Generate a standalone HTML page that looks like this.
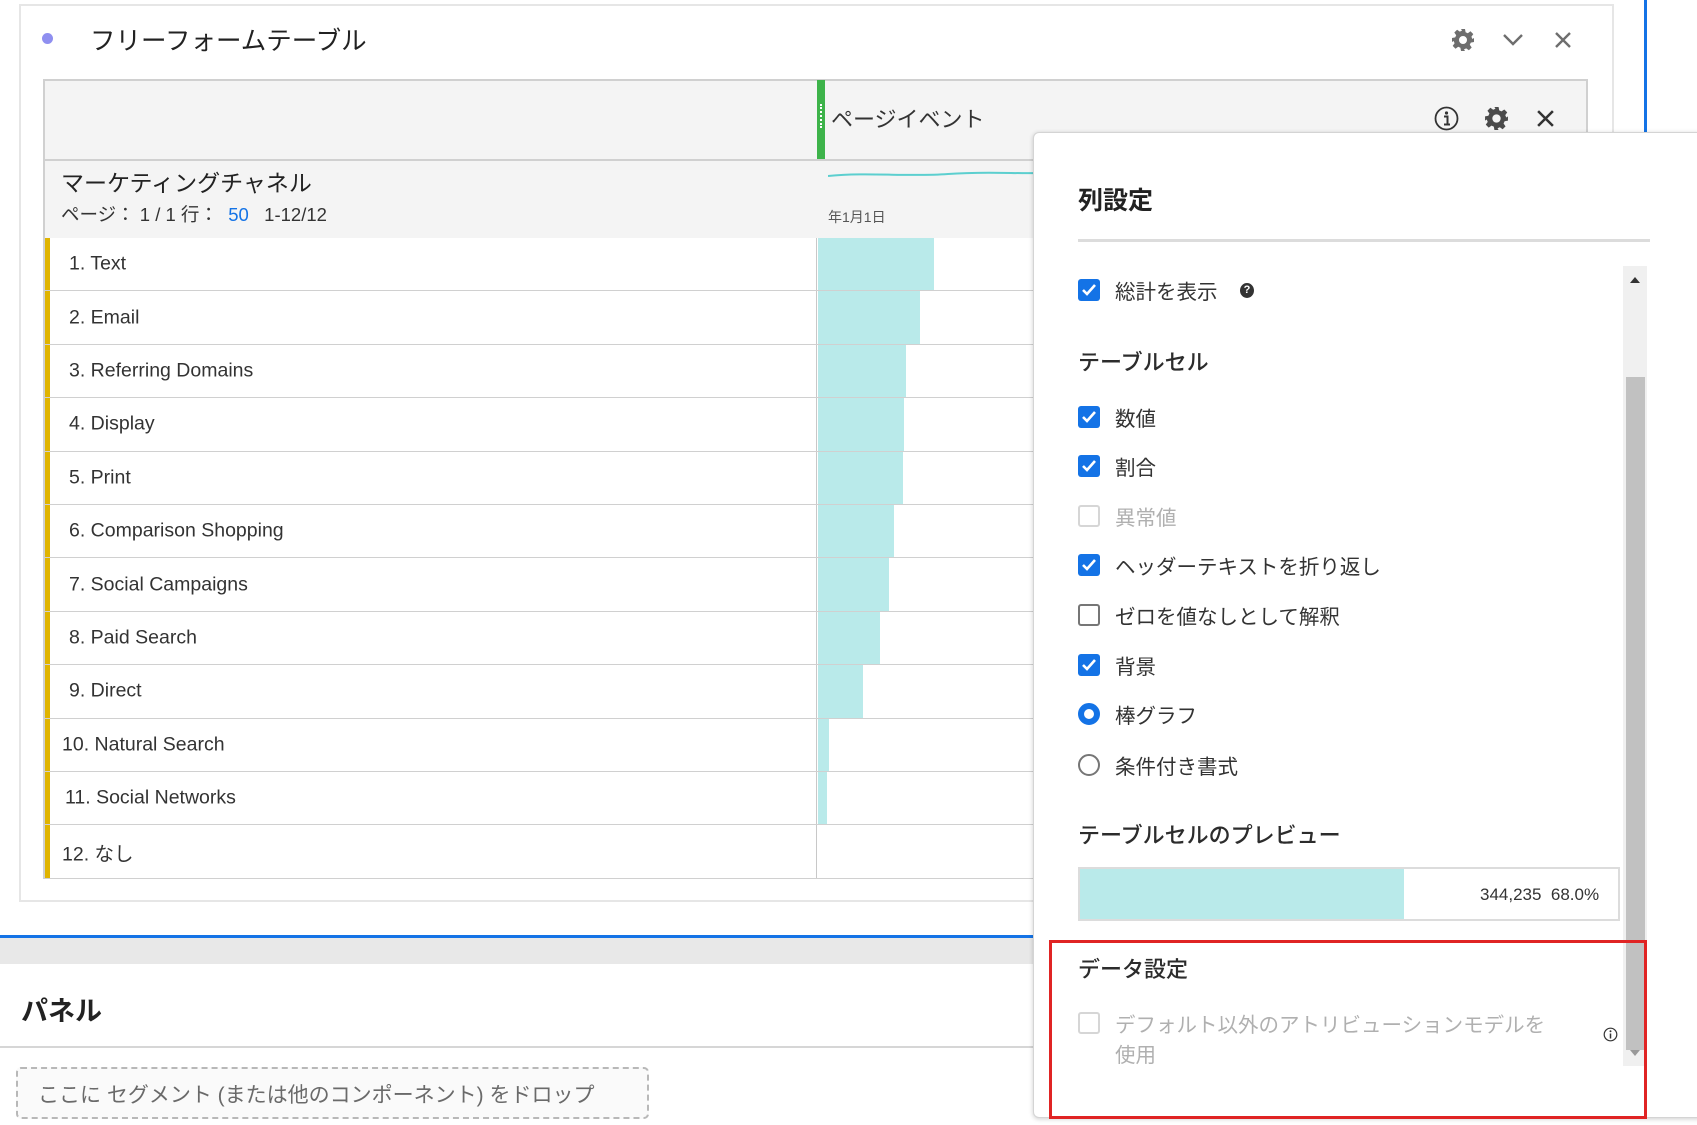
<!DOCTYPE html>
<html><head><meta charset="utf-8"><style>
*{margin:0;padding:0;box-sizing:border-box}
body{width:1697px;height:1125px;position:relative;overflow:hidden;background:#fff;font-family:"Liberation Sans","Noto Sans CJK JP",sans-serif;color:#2c2c2c}
.a{position:absolute;white-space:nowrap}
.c{transform:translateY(-50%)}
.row{position:absolute;left:43px;width:1000px;height:53.4px;border-bottom:1px solid #d0d0d0}
.row .y{position:absolute;left:2px;top:0;bottom:0;width:5px;background:#e0b400}
.row .t{position:absolute;top:50%;transform:translateY(-50%);font-size:19.5px;color:#333}
.row .b{position:absolute;left:775px;top:0;bottom:0;background:#b9eaea}
.row .d{position:absolute;left:773px;top:0;bottom:0;width:1px;background:#c8c8c8}
.cb{position:absolute;left:1078px;width:22px;height:22px;border-radius:3px;background:#1473e6}
.cb svg{position:absolute;left:3px;top:4px}
.cbo{position:absolute;left:1078px;width:22px;height:22px;border-radius:3px;border:2px solid #767676;background:#fff}
.lbl{position:absolute;left:1115px;font-size:20.5px;color:#333;transform:translateY(-50%);white-space:nowrap}
.h{position:absolute;left:1078px;font-size:22px;color:#2c2c2c;transform:translateY(-50%);white-space:nowrap;font-weight:500}
</style></head><body>
<div class="a" style="left:19px;top:4px;width:1595px;height:898px;border:2px solid #e6e6e6"></div>
<div class="a" style="left:1644px;top:0;width:3px;height:140px;background:#1473e6"></div>
<div class="a" style="left:42px;top:33px;width:11px;height:11px;border-radius:50%;background:#8f8ff0"></div>
<div class="a c" style="left:90px;top:39px;font-size:25.5px;color:#222">フリーフォームテーブル</div>
<svg class="a" style="left:1451px;top:28px" width="24" height="24" viewBox="0 0 24 24"><path fill="#6e6e6e" d="M10 1h4l.6 3.2 2.2 1 2.7-1.9 2.8 2.8-1.9 2.7 1 2.2L23 10v4l-3.2.6-1 2.2 1.9 2.7-2.8 2.8-2.7-1.9-2.2 1L14 23h-4l-.6-3.2-2.2-1-2.7 1.9-2.8-2.8 1.9-2.7-1-2.2L1 14v-4l3.2-.6 1-2.2-1.9-2.7 2.8-2.8 2.7 1.9 2.2-1zM12 8a4 4 0 100 8 4 4 0 000-8z"/></svg>
<svg class="a" style="left:1502px;top:32px" width="22" height="16" viewBox="0 0 22 16"><path d="M2 3l9 9 9-9" stroke="#6e6e6e" stroke-width="2.4" fill="none"/></svg>
<svg class="a" style="left:1554px;top:31px" width="18" height="18" viewBox="0 0 18 18"><path d="M2 2l14 14M16 2L2 16" stroke="#6e6e6e" stroke-width="2.4"/></svg>
<div class="a" style="left:43px;top:79px;width:1545px;height:159px;background:#f4f4f4;border:2px solid #d0d0d0;border-bottom:none"></div>
<div class="a" style="left:43px;top:159px;width:1545px;height:2px;background:#d0d0d0"></div>
<div class="a" style="left:817px;top:80px;width:2px;height:79px;background:#c8c8c8"></div>
<div class="a" style="left:817px;top:80px;width:8px;height:79px;background:#3db34a"></div>
<div class="a" style="left:820px;top:104px;width:2px;height:24px;border-left:2px dotted #fff"></div>
<div class="a c" style="left:831px;top:118px;font-size:22px;color:#333">ページイベント</div>
<svg class="a" style="left:1434px;top:106px" width="25" height="25" viewBox="0 0 25 25"><circle cx="12.5" cy="12.5" r="11" stroke="#333" stroke-width="1.8" fill="none"/><circle cx="12.5" cy="7" r="1.6" fill="#333"/><path d="M10 10.5h3.5v8M10 18.5h6" stroke="#333" stroke-width="2" fill="none"/></svg>
<svg class="a" style="left:1484px;top:106px" width="25" height="25" viewBox="0 0 24 24"><path fill="#4b4b4b" d="M10 1h4l.6 3.2 2.2 1 2.7-1.9 2.8 2.8-1.9 2.7 1 2.2L23 10v4l-3.2.6-1 2.2 1.9 2.7-2.8 2.8-2.7-1.9-2.2 1L14 23h-4l-.6-3.2-2.2-1-2.7 1.9-2.8-2.8 1.9-2.7-1-2.2L1 14v-4l3.2-.6 1-2.2-1.9-2.7 2.8-2.8 2.7 1.9 2.2-1zM12 8a4 4 0 100 8 4 4 0 000-8z"/></svg>
<svg class="a" style="left:1536px;top:109px" width="19" height="19" viewBox="0 0 18 18"><path d="M2 2l14 14M16 2L2 16" stroke="#333" stroke-width="2.4"/></svg>
<div class="a c" style="left:61px;top:181px;font-size:23px;color:#222">マーケティングチャネル</div>
<div class="a c" style="left:61px;top:214px;font-size:18.5px;color:#333">ページ： 1 / 1 行： &nbsp;<span style="color:#1473e6">50</span>&nbsp;&nbsp; 1-12/12</div>
<svg class="a" style="left:828px;top:168px" width="210" height="14"><path d="M0 8 C40 4 80 9 120 6 S190 6 210 5" stroke="#5ccfcf" stroke-width="2" fill="none"/></svg>
<div class="a c" style="left:828px;top:217px;font-size:14px;color:#555">年1月1日</div>
<div class="row" style="top:238px"><div class="y"></div><div class="b" style="width:116px"></div><div class="d"></div><div class="t" style="left:26px">1. Text</div></div>
<div class="row" style="top:291.4px"><div class="y"></div><div class="b" style="width:102px"></div><div class="d"></div><div class="t" style="left:26px">2. Email</div></div>
<div class="row" style="top:344.8px"><div class="y"></div><div class="b" style="width:88px"></div><div class="d"></div><div class="t" style="left:26px">3. Referring Domains</div></div>
<div class="row" style="top:398.2px"><div class="y"></div><div class="b" style="width:86px"></div><div class="d"></div><div class="t" style="left:26px">4. Display</div></div>
<div class="row" style="top:451.6px"><div class="y"></div><div class="b" style="width:85px"></div><div class="d"></div><div class="t" style="left:26px">5. Print</div></div>
<div class="row" style="top:505px"><div class="y"></div><div class="b" style="width:76px"></div><div class="d"></div><div class="t" style="left:26px">6. Comparison Shopping</div></div>
<div class="row" style="top:558.4px"><div class="y"></div><div class="b" style="width:71px"></div><div class="d"></div><div class="t" style="left:26px">7. Social Campaigns</div></div>
<div class="row" style="top:611.8px"><div class="y"></div><div class="b" style="width:62px"></div><div class="d"></div><div class="t" style="left:26px">8. Paid Search</div></div>
<div class="row" style="top:665.2px"><div class="y"></div><div class="b" style="width:45px"></div><div class="d"></div><div class="t" style="left:26px">9. Direct</div></div>
<div class="row" style="top:718.6px"><div class="y"></div><div class="b" style="width:11px"></div><div class="d"></div><div class="t" style="left:19px">10. Natural Search</div></div>
<div class="row" style="top:772px"><div class="y"></div><div class="b" style="width:9px"></div><div class="d"></div><div class="t" style="left:22px">11. Social Networks</div></div>
<div class="row" style="top:825.4px"><div class="y"></div><div class="d"></div><div class="t" style="left:19px">12. なし</div></div>
<div class="a" style="left:43px;top:238px;width:2px;height:641px;background:#d0d0d0"></div>
<div class="a" style="left:0;top:935px;width:1040px;height:3px;background:#1473e6"></div>
<div class="a" style="left:0;top:938px;width:1040px;height:26px;background:#e8e8e8"></div>
<div class="a c" style="left:21px;top:1009px;font-size:27px;font-weight:bold;color:#222">パネル</div>
<div class="a" style="left:0;top:1046px;width:1040px;height:2px;background:#d6d6d6"></div>
<div class="a" style="left:16px;top:1067px;width:633px;height:52px;border:2px dashed #b8b8b8;border-radius:5px;background:#fafafa"></div>
<div class="a c" style="left:38px;top:1094px;font-size:21px;color:#6a6a6a">ここに セグメント (または他のコンポーネント) をドロップ</div>
<div class="a" style="left:1033px;top:132px;width:670px;height:986px;background:#fff;border:1px solid #d4d4d4;border-radius:6px;box-shadow:0 1px 5px rgba(0,0,0,.2)"></div>
<div class="a c" style="left:1078px;top:199px;font-size:25px;font-weight:bold;color:#222">列設定</div>
<div class="a" style="left:1078px;top:239px;width:572px;height:3px;background:#dcdcdc"></div>
<div class="a" style="left:1623px;top:266px;width:24px;height:800px;background:#f0f0f0"></div>
<div class="a" style="left:1626px;top:377px;width:19px;height:673px;background:#c1c1c1"></div>
<div class="a" style="left:1630px;top:277px;width:0;height:0;border-left:5px solid transparent;border-right:5px solid transparent;border-bottom:6px solid #333"></div>
<div class="a" style="left:1630px;top:1050px;width:0;height:0;border-left:5px solid transparent;border-right:5px solid transparent;border-top:6px solid #999"></div>
<div class="cb" style="top:279px"><svg width="16" height="14"><path d="M2 7l4 4 8-9" stroke="#fff" stroke-width="2.6" fill="none"/></svg></div>
<div class="lbl" style="top:290px">総計を表示</div>
<div class="a" style="left:1240px;top:283px;width:14px;height:15px;border-radius:50%;background:#333;color:#fff;font-size:11px;font-weight:bold;text-align:center;line-height:15px">?</div>
<div class="h" style="top:361px">テーブルセル</div>
<div class="cb" style="top:406px"><svg width="16" height="14"><path d="M2 7l4 4 8-9" stroke="#fff" stroke-width="2.6" fill="none"/></svg></div>
<div class="lbl" style="top:417px">数値</div>
<div class="cb" style="top:455px"><svg width="16" height="14"><path d="M2 7l4 4 8-9" stroke="#fff" stroke-width="2.6" fill="none"/></svg></div>
<div class="lbl" style="top:466px">割合</div>
<div class="cbo" style="top:505px;border-color:#d6d6d6"></div>
<div class="lbl" style="top:516px;color:#b0b0b0">異常値</div>
<div class="cb" style="top:554px"><svg width="16" height="14"><path d="M2 7l4 4 8-9" stroke="#fff" stroke-width="2.6" fill="none"/></svg></div>
<div class="lbl" style="top:565px">ヘッダーテキストを折り返し</div>
<div class="cbo" style="top:604px"></div>
<div class="lbl" style="top:615px">ゼロを値なしとして解釈</div>
<div class="cb" style="top:654px"><svg width="16" height="14"><path d="M2 7l4 4 8-9" stroke="#fff" stroke-width="2.6" fill="none"/></svg></div>
<div class="lbl" style="top:665px">背景</div>
<div class="a" style="left:1078px;top:703px;width:22px;height:22px;border-radius:50%;border:6px solid #1473e6;background:#fff"></div>
<div class="lbl" style="top:714px">棒グラフ</div>
<div class="a" style="left:1078px;top:754px;width:22px;height:22px;border-radius:50%;border:2px solid #767676;background:#fff"></div>
<div class="lbl" style="top:765px">条件付き書式</div>
<div class="h" style="top:834px">テーブルセルのプレビュー</div>
<div class="a" style="left:1078px;top:867px;width:542px;height:54px;border:2px solid #dcdcdc;background:#fff"></div>
<div class="a" style="left:1080px;top:869px;width:324px;height:50px;background:#b9eaea"></div>
<div class="a c" style="left:1480px;top:895px;font-size:17px;color:#333">344,235&nbsp; 68.0%</div>
<div class="a" style="left:1049px;top:940px;width:598px;height:179px;border:3px solid #e02424"></div>
<div class="h" style="top:968px">データ設定</div>
<div class="cbo" style="top:1012px;border-color:#d6d6d6"></div>
<div class="lbl" style="top:1023px;color:#b0b0b0">デフォルト以外のアトリビューションモデルを</div>
<div class="lbl" style="top:1053px;color:#b0b0b0">使用</div>
<svg class="a" style="left:1603px;top:1027px" width="15" height="15" viewBox="0 0 15 15"><circle cx="7.5" cy="7.5" r="6.3" stroke="#333" stroke-width="1.2" fill="none"/><circle cx="7.5" cy="4.3" r="1" fill="#333"/><path d="M7.5 6.5v5" stroke="#333" stroke-width="1.5"/></svg>
</body></html>
